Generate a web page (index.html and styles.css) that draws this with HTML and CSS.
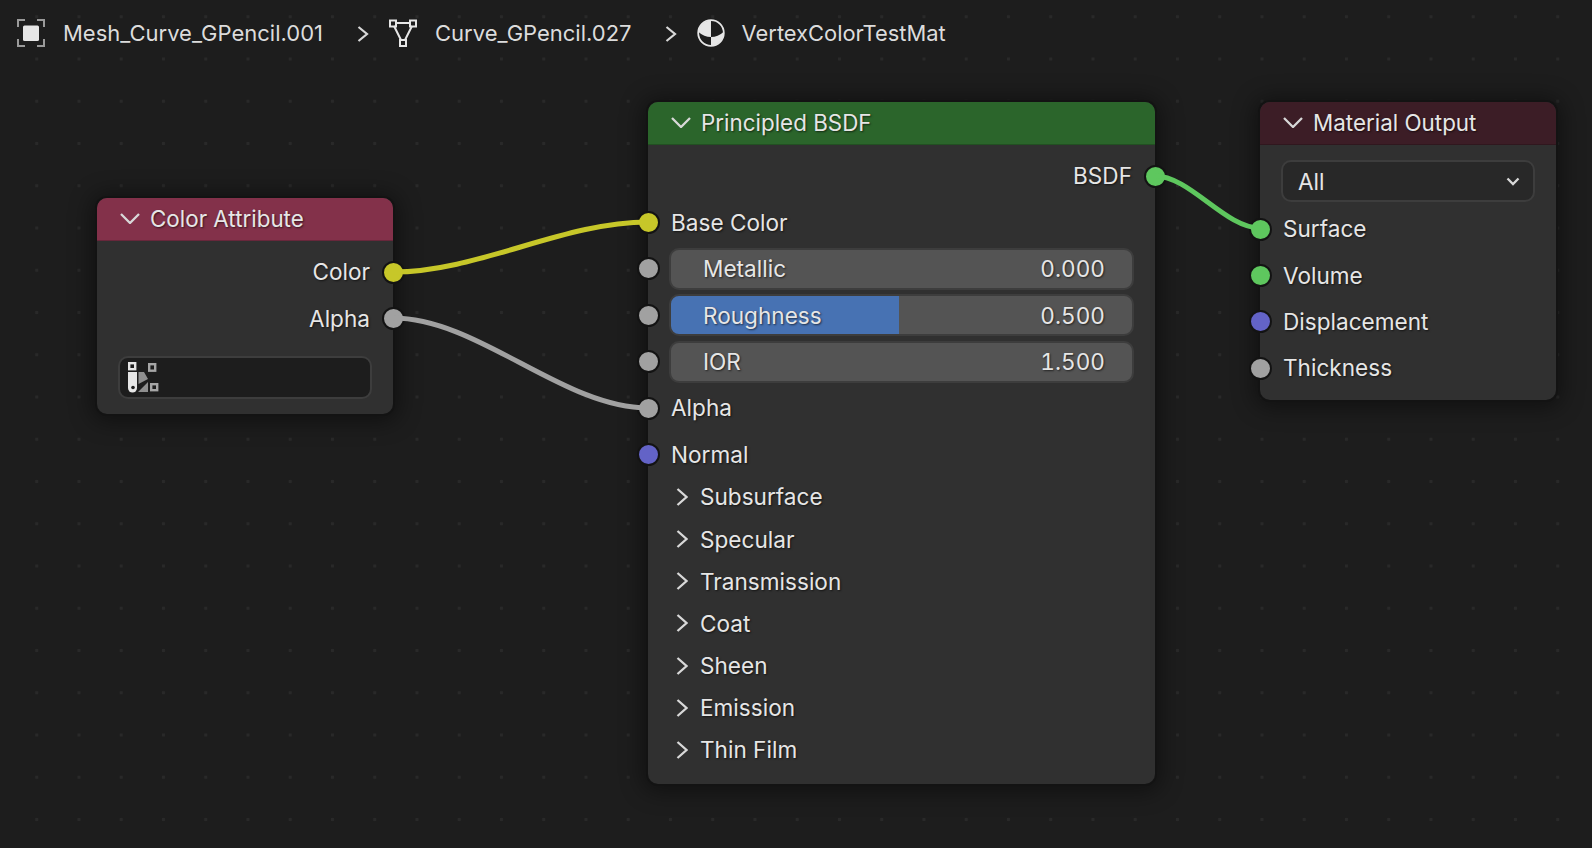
FILE: index.html
```html
<!DOCTYPE html>
<html lang="en">
  <head>
    <meta charset="UTF-8" />
    <title>Shader Editor</title>
    <link rel="stylesheet" href="styles.css">
  </head>
  <body>
    <nav class="crumbs">
      <svg class="crumb-icon" width="28" height="28" viewBox="0 0 28 28">
        <path class="bracket" d="M1 8V1H8M20 1H27V8M27 20V27H20M8 27H1V20" />
        <rect class="solid" x="6" y="6.5" width="16" height="15.5" rx="1.5" />
      </svg>
      <span class="crumb-text">Mesh_Curve_GPencil.001</span>
      <svg class="crumb-arrow" width="12" height="16" viewBox="0 0 12 16">
        <path d="M1.5 1L10 8L1.5 15" />
      </svg>
      <svg class="crumb-icon" width="28" height="28" viewBox="0 0 28 28">
        <path class="wire-line" d="M7.5 4H20.5M5 7L12 21M23 7L16 21" />
        <rect class="wire-box" x="1" y="1.5" width="6" height="6" />
        <rect class="wire-box" x="21" y="1.5" width="6" height="6" />
        <rect class="wire-box" x="11" y="21" width="6" height="6" />
      </svg>
      <span class="crumb-text crumb-second">Curve_GPencil.027</span>
      <svg class="crumb-arrow" width="12" height="16" viewBox="0 0 12 16">
        <path d="M1.5 1L10 8L1.5 15" />
      </svg>
      <svg class="crumb-icon" width="28" height="28" viewBox="0 0 28 28">
        <circle class="ball-ring" cx="14" cy="14" r="12.8" />
        <path class="solid" d="M14 1.5A12.5 12.5 0 0 0 1.5 13Q7 18 14 18ZM14 18Q21 18 26.5 13A12.5 12.5 0 0 1 14 26.5Z" />
      </svg>
      <span class="crumb-text crumb-third">VertexColorTestMat</span>
    </nav>

    <main class="graph">
      <svg class="wires" width="1592" height="848" viewBox="0 0 1592 848">
        <path class="wire wire-yellow" d="M393 272C478 272 563 222 648 222" />
        <path class="wire wire-grey" d="M393 318C478 318 563 408 648 408" />
        <path class="wire wire-green" d="M1155 176C1190 176 1225 228 1260 228" />
      </svg>

      <section class="node node-attribute">
        <header class="node-head head-attribute">
          <svg class="fold" width="20" height="11" viewBox="0 0 20 11"><path d="M1 1L10 10L19 1" /></svg>
          <span>Color Attribute</span>
        </header>
        <div class="node-body body-attribute">
          <div class="row row-out">Color<i class="socket socket-right yellow"></i></div>
          <div class="row row-out">Alpha<i class="socket socket-right grey"></i></div>
          <div class="attr-field">
            <svg width="32" height="32" viewBox="0 0 32 32">
              <rect class="icon-box-white" x="2.2" y="2.2" width="6" height="6" />
              <rect class="icon-box-grey" x="22.2" y="3.2" width="6" height="6.5" />
              <rect class="icon-box-grey" x="24.2" y="23.2" width="6" height="6" />
              <path class="icon-fill-white" d="M1 11H10V27A4.5 4.5 0 0 1 1 27Z" />
              <circle class="icon-hole" cx="6" cy="26.5" r="1.8" />
              <path class="icon-fill-grey" d="M11.5 11L17 11L21 18L11.5 23ZM21 21V31H11Z" />
            </svg>
          </div>
        </div>
      </section>

      <section class="node node-principled">
        <header class="node-head head-principled">
          <svg class="fold" width="20" height="11" viewBox="0 0 20 11"><path d="M1 1L10 10L19 1" /></svg>
          <span>Principled BSDF</span>
        </header>
        <div class="node-body body-principled">
          <div class="row row-out">BSDF<i class="socket socket-right green"></i></div>
          <div class="row row-in">Base Color<i class="socket socket-left yellow"></i></div>
          <div class="row row-field">
            <i class="socket socket-left grey"></i>
            <div class="slider"><span>Metallic</span><span>0.000</span></div>
          </div>
          <div class="row row-field">
            <i class="socket socket-left grey"></i>
            <div class="slider slider-half"><span>Roughness</span><span>0.500</span></div>
          </div>
          <div class="row row-field">
            <i class="socket socket-left grey"></i>
            <div class="slider"><span>IOR</span><span>1.500</span></div>
          </div>
          <div class="row row-in">Alpha<i class="socket socket-left grey"></i></div>
          <div class="row row-in">Normal<i class="socket socket-left blue"></i></div>
          <ul class="panels">
            <li><svg class="panel-arrow" width="12" height="18" viewBox="0 0 12 18"><path d="M1.5 1L10.5 9L1.5 17" /></svg>Subsurface</li>
            <li><svg class="panel-arrow" width="12" height="18" viewBox="0 0 12 18"><path d="M1.5 1L10.5 9L1.5 17" /></svg>Specular</li>
            <li><svg class="panel-arrow" width="12" height="18" viewBox="0 0 12 18"><path d="M1.5 1L10.5 9L1.5 17" /></svg>Transmission</li>
            <li><svg class="panel-arrow" width="12" height="18" viewBox="0 0 12 18"><path d="M1.5 1L10.5 9L1.5 17" /></svg>Coat</li>
            <li><svg class="panel-arrow" width="12" height="18" viewBox="0 0 12 18"><path d="M1.5 1L10.5 9L1.5 17" /></svg>Sheen</li>
            <li><svg class="panel-arrow" width="12" height="18" viewBox="0 0 12 18"><path d="M1.5 1L10.5 9L1.5 17" /></svg>Emission</li>
            <li><svg class="panel-arrow" width="12" height="18" viewBox="0 0 12 18"><path d="M1.5 1L10.5 9L1.5 17" /></svg>Thin Film</li>
          </ul>
        </div>
      </section>

      <section class="node node-output">
        <header class="node-head head-output">
          <svg class="fold" width="20" height="11" viewBox="0 0 20 11"><path d="M1 1L10 10L19 1" /></svg>
          <span>Material Output</span>
        </header>
        <div class="node-body body-output">
          <div class="dropdown">
            <span>All</span>
            <svg width="14" height="9" viewBox="0 0 14 9"><path d="M1.5 1.5L7 7L12.5 1.5" /></svg>
          </div>
          <div class="row row-in">Surface<i class="socket socket-left green"></i></div>
          <div class="row row-in">Volume<i class="socket socket-left green"></i></div>
          <div class="row row-in">Displacement<i class="socket socket-left blue"></i></div>
          <div class="row row-in">Thickness<i class="socket socket-left grey"></i></div>
        </div>
      </section>
    </main>
  </body>
</html>
```

FILE: styles.css
```css
* {
  box-sizing: border-box;
}

html,
body {
  margin: 0;
  height: 100%;
}

body {
  position: relative;
  width: 1592px;
  height: 848px;
  overflow: hidden;
  font-family: Inter, "Liberation Sans", sans-serif;
  font-size: 22.6px;
  color: #e6e6e6;
  background-color: #1d1d1d;
  background-image: radial-gradient(circle, #292929 1.5px, transparent 2px);
  background-size: 42.25px 42.25px;
  background-position: 15.6px -4.4px;
}

/* breadcrumb overlay */
.crumbs {
  position: relative;
  z-index: 3;
  display: flex;
  align-items: center;
  height: 66px;
  padding-left: 17px;
}

.crumb-icon {
  flex: none;
}

.crumb-text {
  margin-left: 18px;
  font-size: 22px;
  color: #dcdcdc;
}

.crumb-second {
  margin-right: -1px;
}

.crumb-third {
  margin-left: 17px;
  font-size: 21.9px;
}

.crumb-arrow {
  flex: none;
  margin: 2px 20px 0 34px;
}

.crumb-arrow path {
  fill: none;
  stroke: #d8d8d8;
  stroke-width: 2.2;
}

.bracket {
  fill: none;
  stroke: #9a9a9a;
  stroke-width: 2;
}

.solid {
  fill: #e6e6e6;
}

.wire-line,
.wire-box {
  fill: none;
  stroke: #e6e6e6;
  stroke-width: 2;
}

.ball-ring {
  fill: none;
  stroke: #e6e6e6;
  stroke-width: 1.8;
}

/* node canvas */
.graph {
  position: absolute;
  inset: 0;
}

.wires {
  position: absolute;
  left: 0;
  top: 0;
  z-index: 2;
  pointer-events: none;
}

.wire {
  fill: none;
  stroke-width: 5;
}

.wire-yellow {
  stroke: #c7c729;
}

.wire-grey {
  stroke: #a1a1a1;
}

.wire-green {
  stroke: #5ec75e;
}

.node {
  position: absolute;
  z-index: 1;
  border-radius: 10px;
  background: #303030;
  box-shadow: 0 0 0 2px #131313, 0 2px 22px 6px rgba(0, 0, 0, 0.42);
}

.node-attribute {
  left: 97px;
  top: 198px;
  width: 296px;
  height: 216px;
}

.node-principled {
  left: 648px;
  top: 102px;
  width: 507px;
  height: 682px;
}

.node-output {
  left: 1260px;
  top: 102px;
  width: 296px;
  height: 298px;
}

.node-head {
  display: flex;
  align-items: center;
  gap: 10px;
  height: 43px;
  padding: 0 0 2px 23px;
  border-radius: 10px 10px 0 0;
  border-bottom: 1px solid rgba(0, 0, 0, 0.2);
  font-size: 22.4px;
  text-shadow: 1px 1px 2px rgba(0, 0, 0, 0.6);
}

.head-attribute {
  background: #83314a;
}

.head-principled {
  background: #2b652b;
}

.head-output {
  background: #3c1d26;
}

.fold {
  flex: none;
  margin-top: 1px;
}

.fold path,
.panel-arrow path,
.dropdown path {
  fill: none;
  stroke: #d8d8d8;
  stroke-width: 2.3;
}

.node-body {
  display: flex;
  flex-direction: column;
}

.body-attribute {
  padding-top: 8px;
}

.body-principled {
  padding-top: 8px;
}

.body-output {
  padding-top: 15px;
}

.row {
  position: relative;
  display: flex;
  align-items: center;
  height: 46.4px;
  padding-bottom: 1px;
  text-shadow: 1px 1px 2px rgba(0, 0, 0, 0.6);
}

.row-out {
  justify-content: flex-end;
  padding-right: 23px;
}

.row-in {
  padding-left: 23px;
}

.row-field {
  padding: 0 21px;
}

.socket {
  position: absolute;
  top: 50%;
  width: 23px;
  height: 23px;
  margin-top: -11.5px;
  border: 2px solid #131313;
  border-radius: 50%;
}

.socket-left {
  left: -11.5px;
}

.socket-right {
  right: -11.5px;
}

.yellow {
  background: #c7c729;
}

.grey {
  background: #a1a1a1;
}

.green {
  background: #5ec75e;
}

.blue {
  background: #6363c7;
}

.attr-field {
  display: flex;
  align-items: center;
  width: 254px;
  height: 43px;
  margin: 14px 0 0 21px;
  padding-left: 7px;
  border: 2px solid #3d3d3d;
  border-radius: 10px;
  background: #1d1d1d;
}

.icon-box-white {
  fill: none;
  stroke: #e6e6e6;
  stroke-width: 2.4;
}

.icon-box-grey {
  fill: none;
  stroke: #a6a6a6;
  stroke-width: 2.4;
}

.icon-fill-white {
  fill: #e6e6e6;
}

.icon-hole {
  fill: #1d1d1d;
}

.icon-fill-grey {
  fill: #8f8f8f;
}

.slider {
  display: flex;
  justify-content: space-between;
  align-items: center;
  width: 100%;
  height: 42px;
  padding: 0 27px 0 32px;
  border: 2px solid #3d3d3d;
  border-radius: 10px;
  background: #545454;
  font-variant-numeric: tabular-nums;
}

.slider-half {
  background: linear-gradient(90deg, #4772b3 0 228px, #545454 228px);
}

.panels {
  margin: -2px 0 0;
  padding: 0 0 0 24px;
  list-style: none;
}

.panels li {
  display: flex;
  align-items: center;
  gap: 12px;
  height: 42.2px;
  text-shadow: 1px 1px 2px rgba(0, 0, 0, 0.6);
}

.panel-arrow {
  flex: none;
  margin-left: 4px;
}

.dropdown {
  display: flex;
  justify-content: space-between;
  align-items: center;
  width: 254px;
  height: 42px;
  margin: 0 0 4px 21px;
  padding: 0 13px 0 15px;
  border: 2px solid #3d3d3d;
  border-radius: 10px;
  background: #282828;
}
```
